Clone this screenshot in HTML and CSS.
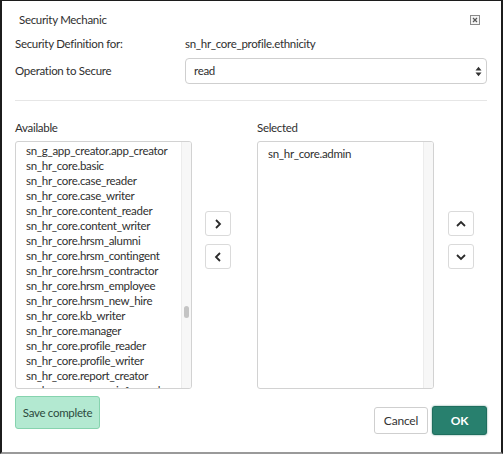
FILE: index.html
```html
<!DOCTYPE html>
<html lang="en">
<head>
    <meta charset="UTF-8">
    <title>Security Mechanic</title>
    <link rel="stylesheet" href="styles.css">
</head>
<body>
<div class="dialog">
    <div class="dialog-header">
        <span class="dialog-title">Security Mechanic</span>
        <span class="close-btn">
            <svg width="10" height="10" viewBox="0 0 10 10">
                <rect x="0.5" y="0.5" width="9" height="9" fill="#f4f4f4" stroke="#8a8a8a"/>
                <path d="M3 3 L7 7 M7 3 L3 7" stroke="#555" stroke-width="1.2"/>
            </svg>
        </span>
    </div>

    <div class="form-row">
        <span class="form-label">Security Definition for:</span>
        <span class="form-value">sn_hr_core_profile.ethnicity</span>
    </div>
    <div class="form-row">
        <label class="form-label" for="operation">Operation to Secure</label>
        <div class="select-box" id="operation">
            <span>read</span>
            <svg width="7" height="11" viewBox="0 0 7 11">
                <path d="M0.5 4.5 L3.5 0.8 L6.5 4.5 Z M0.5 6.5 L3.5 10.2 L6.5 6.5 Z" fill="#333"/>
            </svg>
        </div>
    </div>

    <hr class="divider">

    <div class="slush">
        <div class="slush-column">
            <div class="slush-label">Available</div>
            <div class="list-box">
                <ul class="list-items available-items">
                    <li>sn_g_app_creator.app_creator</li>
                    <li>sn_hr_core.basic</li>
                    <li>sn_hr_core.case_reader</li>
                    <li>sn_hr_core.case_writer</li>
                    <li>sn_hr_core.content_reader</li>
                    <li>sn_hr_core.content_writer</li>
                    <li>sn_hr_core.hrsm_alumni</li>
                    <li>sn_hr_core.hrsm_contingent</li>
                    <li>sn_hr_core.hrsm_contractor</li>
                    <li>sn_hr_core.hrsm_employee</li>
                    <li>sn_hr_core.hrsm_new_hire</li>
                    <li>sn_hr_core.kb_writer</li>
                    <li>sn_hr_core.manager</li>
                    <li>sn_hr_core.profile_reader</li>
                    <li>sn_hr_core.profile_writer</li>
                    <li>sn_hr_core.report_creator</li>
                    <li>sn_hr_core.secure_info_reader</li>
                </ul>
                <div class="scroll-track"><div class="scroll-thumb"></div></div>
            </div>
        </div>

        <div class="move-buttons">
            <button class="icon-btn">
                <svg width="10" height="10" viewBox="0 0 10 10"><path d="M3 1 L7 5 L3 9" fill="none" stroke="#2a2a2a" stroke-width="1.8"/></svg>
            </button>
            <button class="icon-btn">
                <svg width="10" height="10" viewBox="0 0 10 10"><path d="M7 1 L3 5 L7 9" fill="none" stroke="#2a2a2a" stroke-width="1.8"/></svg>
            </button>
        </div>

        <div class="slush-column">
            <div class="slush-label">Selected</div>
            <div class="list-box">
                <ul class="list-items selected-items">
                    <li>sn_hr_core.admin</li>
                </ul>
                <div class="scroll-track"></div>
            </div>
        </div>

        <div class="move-buttons">
            <button class="icon-btn">
                <svg width="10" height="10" viewBox="0 0 10 10"><path d="M1 7 L5 3 L9 7" fill="none" stroke="#2a2a2a" stroke-width="1.8"/></svg>
            </button>
            <button class="icon-btn">
                <svg width="10" height="10" viewBox="0 0 10 10"><path d="M1 3 L5 7 L9 3" fill="none" stroke="#2a2a2a" stroke-width="1.8"/></svg>
            </button>
        </div>
    </div>

    <div class="dialog-footer">
        <div class="save-status">Save complete</div>
        <div class="footer-actions">
            <button class="btn btn-cancel">Cancel</button>
            <button class="btn btn-ok">OK</button>
        </div>
    </div>
</div>
</body>
</html>
```

FILE: styles.css
```css
* {
    box-sizing: border-box;
}

body {
    margin: 0;
    font-family: "Lato", "Liberation Sans", sans-serif;
    font-size: 11.5px;
    letter-spacing: -0.3px;
    color: #2f2f2f;
    background: #fff;
}

.dialog {
    width: 503px;
    height: 454px;
    border: 2px solid #1c1c1c;
    border-top-width: 1px;
    border-bottom: 2px solid #9a9a9a;
    padding: 11px 14px 0 13px;
    display: flex;
    flex-direction: column;
}

.dialog-header {
    height: 16px;
    line-height: 16px;
    display: flex;
    justify-content: space-between;
    align-items: center;
    padding-left: 4px;
}

.close-btn {
    display: flex;
    margin-right: 7px;
}

.form-row {
    display: grid;
    grid-template-columns: 170px 1fr;
    align-items: center;
    margin-top: 8px;
    line-height: 16px;
}

.form-row + .form-row {
    margin-top: 6px;
}

.select-box {
    height: 26px;
    border: 1px solid #cfcfcf;
    border-radius: 4px;
    padding: 0 4px 0 8px;
    display: flex;
    justify-content: space-between;
    align-items: center;
}

.divider {
    border: none;
    border-top: 1px solid #e6e6e6;
    margin: 16px 0 0 0;
    height: 0;
}

.slush {
    display: flex;
    margin-top: 19px;
}

.slush-column {
    display: flex;
    flex-direction: column;
    width: 177px;
}

.slush-label {
    line-height: 16px;
    height: 16px;
    margin-bottom: 5px;
}

.list-box {
    height: 248px;
    border: 1px solid #d2d2d2;
    border-radius: 3px;
    display: flex;
    overflow: hidden;
}

.list-items {
    flex: 1;
    list-style: none;
    margin: 0;
    padding: 1px 0 0 10px;
    line-height: 15px;
    overflow: hidden;
    white-space: nowrap;
}

.selected-items {
    padding-top: 4px;
}

.scroll-track {
    width: 10px;
    background: #f7f7f7;
    border-left: 1px solid #ececec;
    position: relative;
}

.scroll-thumb {
    position: absolute;
    left: 2px;
    top: 164px;
    width: 5px;
    height: 12px;
    border-radius: 3px;
    background: #c4c4c4;
}

.move-buttons {
    display: flex;
    flex-direction: column;
    gap: 8px;
    margin: 91px 26px 0 13px;
}

.move-buttons:last-child {
    margin: 91px 0 0 14px;
}

.icon-btn {
    width: 26px;
    height: 25px;
    padding: 0;
    border: 1px solid #dadada;
    border-radius: 3px;
    background: #fff;
    display: flex;
    align-items: center;
    justify-content: center;
}

.dialog-footer {
    display: flex;
    justify-content: space-between;
    align-items: flex-start;
    margin-top: 7px;
}

.save-status {
    width: 85px;
    height: 33px;
    line-height: 31px;
    text-align: center;
    background: #b3e9d1;
    border: 1px solid #86d3ae;
    border-radius: 3px;
    color: #2c4a3e;
}

.footer-actions {
    display: flex;
    align-items: center;
    gap: 4px;
    margin-top: 10px;
}

.btn {
    font-family: inherit;
    font-size: 12px;
    letter-spacing: -0.2px;
    border-radius: 3px;
    padding: 0;
}

.btn-cancel {
    width: 54px;
    height: 27px;
    background: #fff;
    border: 1px solid #cfcfcf;
    color: #333;
}

.btn-ok {
    width: 55px;
    height: 29px;
    background: #28806e;
    border: 1px solid #1f6e5e;
    color: #fff;
    font-weight: bold;
    box-shadow: 0 0 2px rgba(31, 110, 94, 0.7);
}
```
